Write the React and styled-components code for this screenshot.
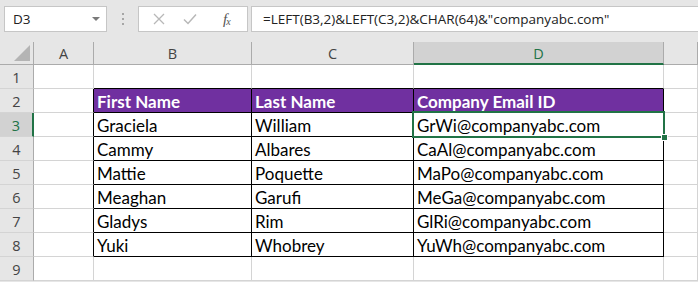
import React from "react";
import styled, { createGlobalStyle } from "styled-components";

const GlobalStyle = createGlobalStyle`
  html, body { margin: 0; padding: 0; background: #ffffff; }
  * { box-sizing: border-box; }
`;

const Page = styled.div`
  width: 698px;
  height: 282px;
  overflow: hidden;
  background: #e6e6e6;
  font-family: "Open Sans", "Noto Sans", sans-serif;
`;

const FormulaBar = styled.div`
  display: flex;
  align-items: flex-start;
  height: 42px;
  padding: 6px 0 0 4px;
`;

const NameBox = styled.div`
  position: relative;
  width: 103px;
  height: 26px;
  background: #fff;
  border: 1px solid #c6c6c6;
  display: flex;
  align-items: center;
  padding-left: 8px;
  font-size: 13.5px;
  color: #222;
`;

const Caret = styled.span`
  position: absolute;
  right: 6px;
  top: 10px;
  width: 0;
  height: 0;
  border-left: 4px solid transparent;
  border-right: 4px solid transparent;
  border-top: 4px solid #7a7a7a;
`;

const Dots = styled.div`
  width: 31px;
  height: 26px;
  display: flex;
  flex-direction: column;
  align-items: center;
  justify-content: center;
  gap: 3px;
  span {
    width: 2px;
    height: 2px;
    background: #a6a6a6;
  }
`;

const FxBox = styled.div`
  width: 110px;
  height: 26px;
  background: #fff;
  border: 1px solid #c6c6c6;
  display: flex;
  align-items: center;
  padding-left: 14px;
  gap: 18px;
`;

const FxLabel = styled.span`
  font-family: "Liberation Serif", "DejaVu Serif", serif;
  font-style: italic;
  font-size: 15px;
  color: #555;
  margin-left: 8px;
  letter-spacing: -1px;
  sub { font-size: 10px; vertical-align: -1px; }
`;

const FormulaInput = styled.div`
  flex: 1;
  height: 26px;
  margin-left: 3px;
  background: #fff;
  border: 1px solid #c6c6c6;
  border-right: none;
  display: flex;
  align-items: center;
  padding-left: 11px;
  font-size: 13.5px;
  color: #222;
  white-space: nowrap;
`;

const Grid = styled.div`
  display: grid;
  grid-template-columns: 34px 60px 158px 162px 250px 1fr;
  grid-template-rows: 23px repeat(9, 24px);
  background: #fff;
`;

const ColHead = styled.div`
  background: ${(p) => (p.$active ? "#d2d2d2" : "#e6e6e6")};
  color: ${(p) => (p.$active ? "#217346" : "#444")};
  border-right: 1px solid #ababab;
  border-bottom: ${(p) => (p.$active ? "2px solid #217346" : "1px solid #ababab")};
  display: flex;
  align-items: center;
  justify-content: center;
  font-size: 14.5px;
  padding-top: 1px;
`;

const Corner = styled.div`
  background: #e6e6e6;
  border-right: 1px solid #ababab;
  border-bottom: 1px solid #ababab;
  display: flex;
  align-items: flex-end;
  justify-content: flex-end;
  padding: 0 3px 3px 0;
`;

const RowHead = styled.div`
  background: ${(p) => (p.$active ? "#d2d2d2" : "#e6e6e6")};
  color: ${(p) => (p.$active ? "#217346" : "#444")};
  border-right: ${(p) => (p.$active ? "2px solid #217346" : "1px solid #ababab")};
  border-bottom: 1px solid #d4d4d4;
  display: flex;
  align-items: center;
  justify-content: center;
  font-size: 14.5px;
  padding-top: 1px;
`;

const Cell = styled.div`
  position: relative;
  background: ${(p) => (p.$head ? "#7030a0" : "#fff")};
  color: ${(p) => (p.$head ? "#fff" : "#000")};
  font-weight: ${(p) => (p.$head ? 700 : 400)};
  border-right: 1px solid ${(p) => (p.$rb ? "#000" : "#d4d4d4")};
  border-bottom: 1px solid ${(p) => (p.$bb ? "#000" : "#d4d4d4")};
  font-family: "Lato", "Open Sans", sans-serif;
  font-size: 17px;
  line-height: 20px;
  padding: 3px 0 0 3px;
  white-space: nowrap;
  overflow: visible;
  &::after {
    content: "";
    display: ${(p) => (p.$sel ? "block" : "none")};
    position: absolute;
    left: -2px;
    top: -2px;
    right: -2px;
    bottom: -2px;
    border: 2px solid #217346;
    pointer-events: none;
    z-index: 2;
  }
`;

const Handle = styled.span`
  position: absolute;
  right: -5px;
  bottom: -5px;
  width: 7px;
  height: 7px;
  background: #217346;
  border: 1px solid #fff;
  z-index: 3;
`;

const cols = ["A", "B", "C", "D"];
const data = [
  ["First Name", "Last Name", "Company Email ID"],
  ["Graciela", "William", "GrWi@companyabc.com"],
  ["Cammy", "Albares", "CaAl@companyabc.com"],
  ["Mattie", "Poquette", "MaPo@companyabc.com"],
  ["Meaghan", "Garufi", "MeGa@companyabc.com"],
  ["Gladys", "Rim", "GlRi@companyabc.com"],
  ["Yuki", "Whobrey", "YuWh@companyabc.com"],
];

function XIcon() {
  return (
    <svg width="12" height="12" viewBox="0 0 12 12">
      <path d="M1 1 L11 11 M11 1 L1 11" stroke="#b8b8b8" strokeWidth="1.3" fill="none" />
    </svg>
  );
}

function CheckIcon() {
  return (
    <svg width="14" height="12" viewBox="0 0 14 12">
      <path d="M1 6.5 L5 10.5 L13 1.5" stroke="#b8b8b8" strokeWidth="1.5" fill="none" />
    </svg>
  );
}

export default function App() {
  const rows = [];
  for (let r = 1; r <= 9; r++) {
    const active = r === 3;
    rows.push(
      <RowHead key={`rh${r}`} $active={active}>
        {r}
      </RowHead>
    );
    for (let c = 0; c < 5; c++) {
      const inTable = r >= 2 && r <= 8 && c >= 1 && c <= 3;
      const rb = inTable || (c === 0 && r >= 2 && r <= 8);
      const bb = inTable || (r === 1 && c >= 1 && c <= 3);
      const text = inTable ? data[r - 2][c - 1] : "";
      const sel = r === 3 && c === 3;
      rows.push(
        <Cell key={`c${r}-${c}`} $rb={rb} $bb={bb} $head={inTable && r === 2} $sel={sel}>
          {text}
          {sel && <Handle />}
        </Cell>
      );
    }
  }

  return (
    <>
      <GlobalStyle />
      <Page>
        <FormulaBar>
          <NameBox>
            D3
            <Caret />
          </NameBox>
          <Dots>
            <span />
            <span />
            <span />
          </Dots>
          <FxBox>
            <XIcon />
            <CheckIcon />
            <FxLabel>
              f<sub>x</sub>
            </FxLabel>
          </FxBox>
          <FormulaInput>=LEFT(B3,2)&amp;LEFT(C3,2)&amp;CHAR(64)&amp;"companyabc.com"</FormulaInput>
        </FormulaBar>
        <Grid>
          <Corner>
            <svg width="16" height="16" viewBox="0 0 16 16">
              <path d="M16 0 L16 16 L0 16 Z" fill="#b4b4b4" />
            </svg>
          </Corner>
          {cols.map((c) => (
            <ColHead key={c} $active={c === "D"}>
              {c}
            </ColHead>
          ))}
          <ColHead />
          {rows}
        </Grid>
      </Page>
    </>
  );
}
